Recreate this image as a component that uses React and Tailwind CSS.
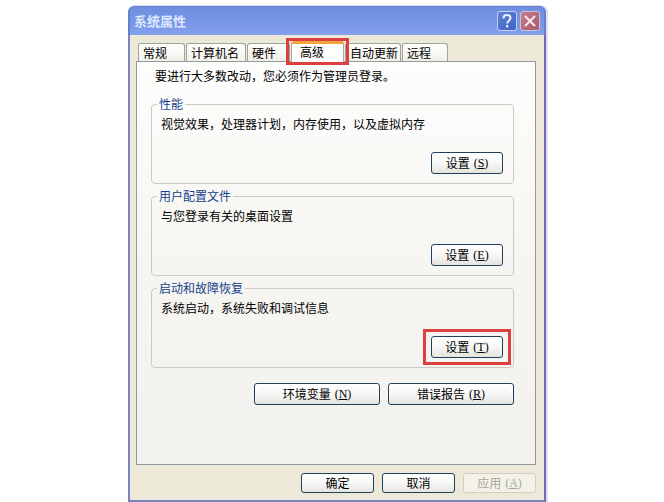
import React, { useState } from "react";
import clsx from "clsx";

const TABS = [
  { id: "general", label: "常规", width: "w-[47px]" },
  { id: "computer", label: "计算机名", width: "w-[60px]" },
  { id: "hardware", label: "硬件", width: "w-[43px]" },
  { id: "advanced", label: "高级", width: "w-[53px]" },
  { id: "updates", label: "自动更新", width: "w-[56px]" },
  { id: "remote", label: "远程", width: "w-[46px]" },
];

const GROUPS = [
  {
    title: "性能",
    text: "视觉效果，处理器计划，内存使用，以及虚拟内存",
    hotkey: "S",
  },
  { title: "用户配置文件", text: "与您登录有关的桌面设置", hotkey: "E" },
  {
    title: "启动和故障恢复",
    text: "系统启动，系统失败和调试信息",
    hotkey: "T",
    marked: true,
  },
];

function Button({ children, hotkey, disabled, className }) {
  return (
    <button
      type="button"
      disabled={disabled}
      className={clsx(
        "flex items-center justify-center rounded-[3px] border whitespace-nowrap",
        disabled
          ? "border-[#d3d0c0] bg-[#f3f2e8] text-[#aaa899]"
          : "border-[#21405c] bg-linear-to-b from-white via-[#f7f8f6] to-[#e4e5e0] text-black",
        className
      )}
    >
      {children}
      {hotkey && (
        <span className="ml-1 font-['Liberation_Serif','Noto_Sans_CJK_SC',serif]">
          (<span className="underline">{hotkey}</span>)
        </span>
      )}
    </button>
  );
}

function Highlight({ className }) {
  return (
    <span
      className={clsx(
        "pointer-events-none absolute z-10 border-3 border-[#dc3f40]",
        className
      )}
    />
  );
}

function TitleBar() {
  return (
    <header className="flex h-[29px] items-center justify-between rounded-t-md border-x-2 border-t border-[#6680cc] bg-linear-to-b from-[#6f8fdf] via-[#7795e5] to-[#84a1ee] pr-1 pl-1">
      <h1 className="text-[13px] leading-4 font-bold text-[#dce8ff]">
        系统属性
      </h1>
      <div className="flex gap-[3px]">
        <button
          type="button"
          aria-label="帮助"
          className="flex size-5 items-center justify-center rounded-[3px] border border-[#c3d1f5] bg-linear-to-br from-[#5f82d8] to-[#3f62c4]"
        >
          <svg viewBox="0 0 16 16" className="size-4" fill="none" stroke="#eef3ff">
            <path
              d="M4.500 5.400C4.500 3 6 2 8 2s3.500 1.200 3.500 3.100c0 2.500-3.300 2.700-3.300 5.300"
              strokeWidth="2"
            />
            <path d="M8.200 12v2.300" strokeWidth="2.200" />
          </svg>
        </button>
        <button
          type="button"
          aria-label="关闭"
          className="flex size-5 items-center justify-center rounded-[3px] border border-[#cbbfdf] bg-linear-to-br from-[#c77d8d] to-[#a9596c]"
        >
          <svg viewBox="0 0 16 16" className="size-4" fill="none" stroke="#f4ecf2">
            <path d="M3 3l10 10M13 3L3 13" strokeWidth="2" />
          </svg>
        </button>
      </div>
    </header>
  );
}

function Tabs({ active, onSelect }) {
  return (
    <div role="tablist" className="flex h-5 items-end gap-px pl-0.5">
      {TABS.map((tab) => (
        <div key={tab.id} className={clsx("relative", tab.width)}>
          <button
            type="button"
            role="tab"
            aria-selected={tab.id === active}
            onClick={() => onSelect(tab.id)}
            className={clsx(
              "flex w-full rounded-t-[3px] border border-b-0 whitespace-nowrap",
              tab.id === active
                ? "-mb-px h-[21px] border-t-3 border-[#a5a89e] border-t-[#f3a43c] bg-[#fdfdfc] pl-2 leading-[15px]"
                : "h-[18px] border-[#9da39d] bg-linear-to-b from-white to-[#f1f0e8] pl-1 leading-[17px]"
            )}
          >
            {tab.label}
          </button>
          {tab.id === "advanced" && (
            <Highlight className="-inset-x-[5px] -top-[3px] -bottom-1" />
          )}
        </div>
      ))}
    </div>
  );
}

function SettingsGroup({ title, text, hotkey, marked }) {
  return (
    <fieldset className="rounded border border-[#cbcbc3] pr-2.5 pb-[9px] pl-[9px]">
      <legend className="-ml-1 px-0.5 text-[#15428b]">{title}</legend>
      <p className="pt-1">{text}</p>
      <div className="relative mt-5 ml-auto w-[72px]">
        <Button hotkey={hotkey} className="h-[22px] w-full">
          设置
        </Button>
        {marked && <Highlight className="-inset-x-2 -inset-y-[7px]" />}
      </div>
    </fieldset>
  );
}

function App() {
  const [active, setActive] = useState("advanced");

  return (
    <main className="min-h-screen bg-white pt-1.5 pr-[118px] pl-32 font-['Noto_Sans_CJK_SC',sans-serif] text-xs leading-4 text-black">
      <section className="rounded-t-md shadow-[1px_0_0_1px_#e3def3]">
        <TitleBar />
        <div className="border-x-2 border-b-2 border-[#7b83bd] border-r-[#7468ae] bg-[#ece9d8] pt-1.5 pr-2 pb-[7px] pl-1.5">
          <Tabs active={active} onSelect={setActive} />
          <div
            role="tabpanel"
            className="border border-[#919b9c] bg-linear-to-b from-[#fdfdfc] via-[#f6f5f1] to-[#f3f1ee] pt-1.5 pr-[21px] pb-[59px] pl-3.5"
          >
            <p className="pl-1">要进行大多数改动，您必须作为管理员登录。</p>
            <div className="mt-3 flex flex-col gap-1">
              {GROUPS.map((group) => (
                <SettingsGroup key={group.title} {...group} />
              ))}
            </div>
            <div className="mt-[15px] flex justify-end gap-2">
              <Button hotkey="N" className="h-[22px] w-[126px]">
                环境变量
              </Button>
              <Button hotkey="R" className="h-[22px] w-[126px]">
                错误报告
              </Button>
            </div>
          </div>
          <footer className="mt-2 flex justify-end gap-2">
            <Button className="h-5 w-[73px]">确定</Button>
            <Button className="h-5 w-[73px]">取消</Button>
            <Button hotkey="A" disabled className="h-5 w-[73px]">
              应用
            </Button>
          </footer>
        </div>
      </section>
    </main>
  );
}

export default App;
